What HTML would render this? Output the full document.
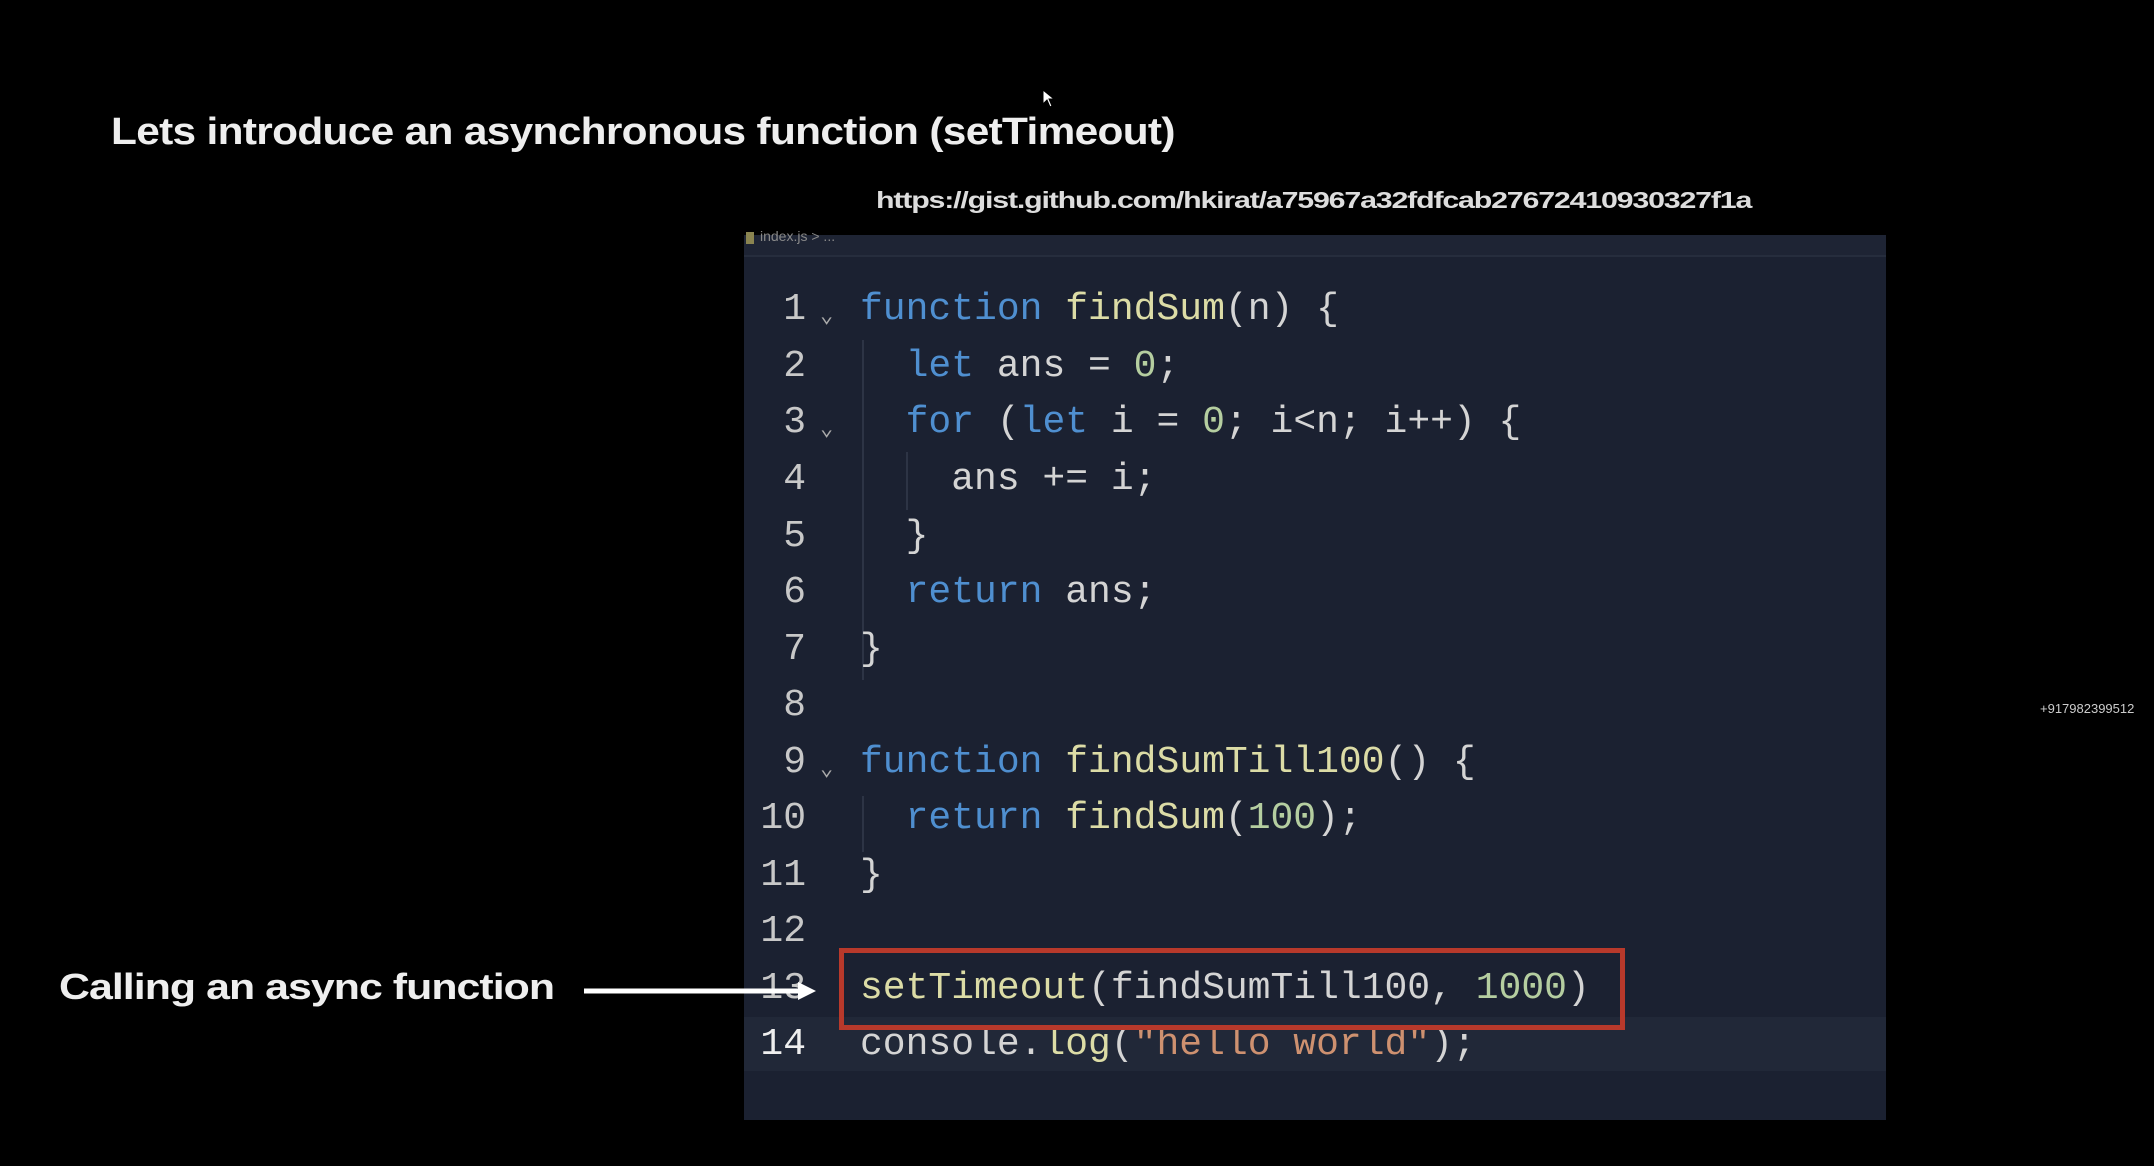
<!DOCTYPE html>
<html><head><meta charset="utf-8"><style>
html,body{margin:0;padding:0;background:#000;width:2154px;height:1166px;overflow:hidden;position:relative;font-family:"Liberation Sans",sans-serif}
.abs{position:absolute;white-space:pre}
.title{left:111px;top:111px;font-size:38px;font-weight:bold;color:#eee;letter-spacing:-0.6px;transform:scaleX(1.115);transform-origin:0 0}
.url{left:876px;top:187px;font-size:23px;font-weight:bold;color:#ddd;letter-spacing:-0.9px;transform:scaleX(1.32);transform-origin:0 0}
.panel{left:744px;top:235px;width:1142px;height:885px;background:#1b2131}
.hdr{left:744px;top:235px;width:1142px;height:20px;background:#1e2434;border-bottom:2px solid #262d3d}
.code{font-family:"Liberation Mono",monospace;font-size:38px;color:#d4d4d4}
.ln{width:70px;text-align:right;left:736px;color:#c8c8c8}
.k{color:#4f8fd0}.f{color:#dcdca6}.n{color:#b5cea0}.s{color:#ce9170}
.chev{color:#aaa;font-size:22px}
.call{left:59px;top:966px;font-size:36px;font-weight:bold;color:#eee;letter-spacing:-0.8px;transform:scaleX(1.19);transform-origin:0 0}
.box{left:839px;top:948px;width:776px;height:72px;border:5px solid #b8392b}
.band{left:744px;top:1017px;width:1142px;height:54px;background:#212838}
.guide{position:absolute;width:2px;background:#2d3445}
</style></head><body>
<div class="abs title">Lets introduce an asynchronous function (setTimeout)</div>
<svg class="abs" style="left:1041px;top:88px" width="16" height="22"><path d="M2 2 L2 16 L6 12 L9 19 L11 18 L8 11 L13 11 Z" fill="#fff" stroke="#000" stroke-width="1"/></svg>
<div class="abs url">https://gist.github.com/hkirat/a75967a32fdfcab27672410930327f1a</div>
<div class="abs panel"></div>
<div class="abs hdr"></div>
<div class="abs" style="left:746px;top:232px;width:8px;height:12px;background:#8a8450"></div>
<div class="abs" style="left:760px;top:228px;font-size:14px;color:#888">index.js &gt; ...</div>
<div class="abs band"></div>
<div class="guide" style="left:862px;top:340px;height:340px"></div>
<div class="guide" style="left:906px;top:452px;height:58px"></div>
<div class="guide" style="left:862px;top:796px;height:56px"></div>
<div class="abs code" style="left:0;top:5px">
<div class="abs ln" style="top:283px">1</div><div class="abs chev" style="left:820px;top:298px">⌄</div>
<div class="abs ln" style="top:340px">2</div>
<div class="abs ln" style="top:396px">3</div><div class="abs chev" style="left:820px;top:411px">⌄</div>
<div class="abs ln" style="top:453px">4</div>
<div class="abs ln" style="top:510px">5</div>
<div class="abs ln" style="top:566px">6</div>
<div class="abs ln" style="top:623px">7</div>
<div class="abs ln" style="top:679px">8</div>
<div class="abs ln" style="top:736px">9</div><div class="abs chev" style="left:820px;top:751px">⌄</div>
<div class="abs ln" style="top:792px">10</div>
<div class="abs ln" style="top:849px">11</div>
<div class="abs ln" style="top:905px">12</div>
<div class="abs ln" style="top:962px">13</div>
<div class="abs ln" style="top:1018px;color:#eee">14</div>
<div class="abs" style="left:860px;top:283px"><span class="k">function</span> <span class="f">findSum</span>(n) {</div>
<div class="abs" style="left:860px;top:340px">  <span class="k">let</span> ans = <span class="n">0</span>;</div>
<div class="abs" style="left:860px;top:396px">  <span class="k">for</span> (<span class="k">let</span> i = <span class="n">0</span>; i&lt;n; i++) {</div>
<div class="abs" style="left:860px;top:453px">    ans += i;</div>
<div class="abs" style="left:860px;top:510px">  }</div>
<div class="abs" style="left:860px;top:566px">  <span class="k">return</span> ans;</div>
<div class="abs" style="left:860px;top:623px">}</div>
<div class="abs" style="left:860px;top:736px"><span class="k">function</span> <span class="f">findSumTill100</span>() {</div>
<div class="abs" style="left:860px;top:792px">  <span class="k">return</span> <span class="f">findSum</span>(<span class="n">100</span>);</div>
<div class="abs" style="left:860px;top:849px">}</div>
<div class="abs" style="left:860px;top:962px"><span class="f">setTimeout</span>(findSumTill100, <span class="n">1000</span>)</div>
<div class="abs" style="left:860px;top:1018px">console.<span class="f">log</span>(<span class="s">"hello world"</span>);</div>
</div>
<div class="abs box"></div>
<div class="abs call">Calling an async function</div>
<svg class="abs" style="left:582px;top:978px" width="240" height="26"><line x1="2" y1="13" x2="222" y2="13" stroke="#fff" stroke-width="5"/><path d="M216 4 L234 13 L216 22 Z" fill="#fff"/></svg>
<div class="abs" style="left:2040px;top:701px;font-size:13px;color:#ccc">+917982399512</div>
</body></html>
